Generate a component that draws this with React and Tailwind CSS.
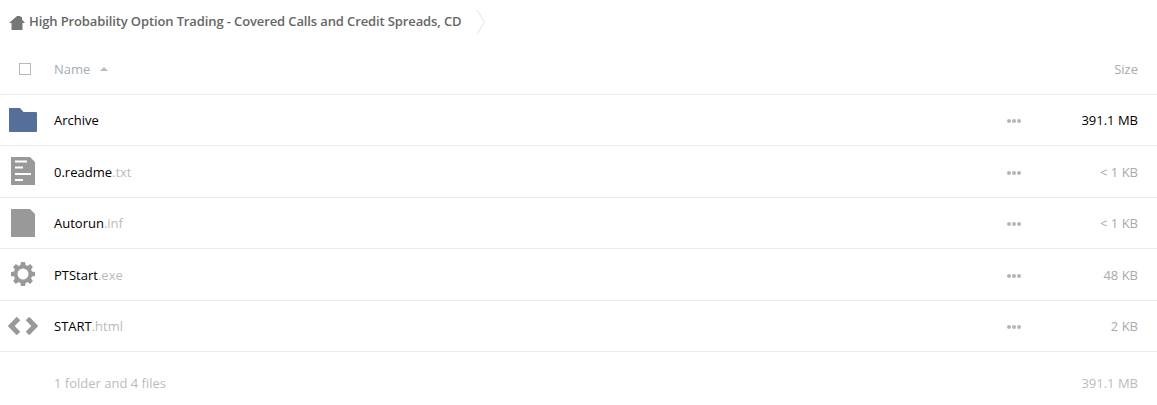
const ROWS = [
  { name: "Archive", ext: "", icon: "folder", size: "391.1 MB", dark: true },
  { name: "0.readme", ext: ".txt", icon: "text", size: "< 1 KB" },
  { name: "Autorun", ext: ".inf", icon: "file", size: "< 1 KB" },
  { name: "PTStart", ext: ".exe", icon: "gear", size: "48 KB" },
  { name: "START", ext: ".html", icon: "code", size: "2 KB" },
];

function FileIcon({ type }) {
  if (type === "folder") {
    return (
      <svg width="28" height="24" viewBox="0 0 28 24" className="block">
        <path d="M0 0h11l3.500 4H27a1 1 0 0 1 1 1v18a1 1 0 0 1-1 1H1a1 1 0 0 1-1-1z" fill="#54709a" />
      </svg>
    );
  }
  if (type === "text") {
    return (
      <svg width="24" height="28" viewBox="0 0 24 28" className="block">
        <path d="M0 0h19l5 5v23H0z" fill="#999999" />
        <path d="M4 4.500h12M4 10.500h8M4 17h16M4 23h8" stroke="#ffffff" strokeWidth="2" />
      </svg>
    );
  }
  if (type === "file") {
    return (
      <svg width="24" height="28" viewBox="0 0 24 28" className="block">
        <path d="M0 0h19l5 5v23H0z" fill="#999999" />
      </svg>
    );
  }
  if (type === "gear") {
    return (
      <svg width="24" height="24" viewBox="0 0 24 24" className="block">
        <path
          fill="#999999"
          fillRule="evenodd"
          d="M10 0h4l.6 3.100 1.900.8 2.600-1.800 2.800 2.800-1.800 2.600.8 1.900 3.100.6v4l-3.100.6-.8 1.900 1.800 2.600-2.800 2.800-2.600-1.800-1.900.8L14 24h-4l-.6-3.100-1.900-.8-2.600 1.800-2.800-2.800 1.800-2.600-.8-1.900L0 14v-4l3.100-.6.8-1.900L2.100 4.900l2.800-2.800 2.600 1.800 1.900-.8zM12 6.500a5.500 5.500 0 1 0 0 11 5.500 5.500 0 0 0 0-11z"
        />
      </svg>
    );
  }
  return (
    <svg width="30" height="18" viewBox="0 0 30 18" className="block">
      <path d="M10.500 1.500 3.200 9l7.300 7.500M19.500 1.500 26.800 9l-7.300 7.500" fill="none" stroke="#999999" strokeWidth="5" />
    </svg>
  );
}

function Row({ row }) {
  return (
    <div className="flex items-center h-[51.5px] border-b border-[#ebebeb]">
      <div className="w-[46px] shrink-0 flex justify-center">
        <FileIcon type={row.icon} />
      </div>
      <div className="flex-1 pl-[8px] pt-[2px] text-[13px] text-black">
        {row.name}
        <span className="text-[#bbbbbb]">{row.ext}</span>
      </div>
      <div className="flex gap-[1px] mr-[57px] mt-[3px]">
        <span className="w-[4px] h-[4px] rounded-full bg-[#b5b5b5]" />
        <span className="w-[4px] h-[4px] rounded-full bg-[#b5b5b5]" />
        <span className="w-[4px] h-[4px] rounded-full bg-[#b5b5b5]" />
      </div>
      <div className={`w-[60px] pt-[2px] text-right text-[13px] mr-[19px] ${row.dark ? "text-black" : "text-[#a9a9a9]"}`}>
        {row.size}
      </div>
    </div>
  );
}

export default function App() {
  return (
    <div className="w-[1157px] h-[405px] overflow-hidden bg-white font-['Open_Sans',sans-serif]">
      {/* breadcrumb */}
      <div className="flex items-center h-[44px] pl-[9px]">
        <svg width="16" height="14" viewBox="0 0 16 14" className="mr-[4px] mt-[1px]">
          <path d="M8 0h3.500V1H13v2.500l3 3.500h-2.500v7h-11V7H0z" fill="#777777" />
        </svg>
        <span className="text-[13px] tracking-[-0.12px] font-semibold text-[#666666]">
          High Probability Option Trading - Covered Calls and Credit Spreads, CD
        </span>
        <svg width="10" height="26" viewBox="0 0 10 26" className="ml-[15px]">
          <path d="M1 1l7.500 12L1 25" fill="none" stroke="#e3e3e3" />
        </svg>
      </div>

      {/* table header */}
      <div className="flex items-center h-[50.5px] pt-[1px] border-b border-[#ebebeb]">
        <div className="w-[54px] shrink-0 pl-[19px]">
          <div className="w-[12px] h-[12px] border border-[#b8b8b8]" />
        </div>
        <div className="flex-1 flex items-center text-[13px] text-[#a3acb5]">
          Name
          <span className="ml-[10px] w-0 h-0 border-x-[4px] border-x-transparent border-b-[4px] border-b-[#bbbbbb]" />
        </div>
        <div className="text-[13px] text-[#a9a9a9] mr-[19px]">Size</div>
      </div>

      {ROWS.map((row) => (
        <Row key={row.name} row={row} />
      ))}

      {/* summary */}
      <div className="flex items-center justify-between h-[63px] pl-[54px] pr-[19px] text-[13px] text-[#bbbbbb]">
        <span>1 folder and 4 files</span>
        <span>391.1 MB</span>
      </div>
    </div>
  );
}
